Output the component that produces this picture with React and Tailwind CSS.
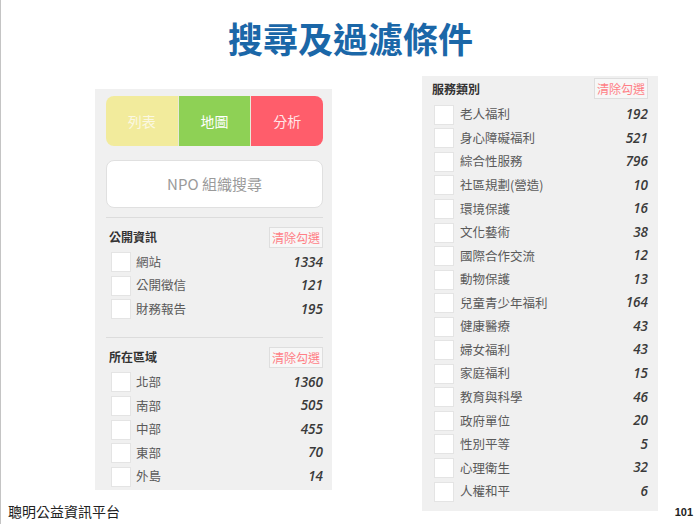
import React from "react";

const publicInfo = [
  ["網站", 1334],
  ["公開徵信", 121],
  ["財務報告", 195],
];

const regions = [
  ["北部", 1360],
  ["南部", 505],
  ["中部", 455],
  ["東部", 70],
  ["外島", 14],
];

const services = [
  ["老人福利", 192],
  ["身心障礙福利", 521],
  ["綜合性服務", 796],
  ["社區規劃(營造)", 10],
  ["環境保護", 16],
  ["文化藝術", 38],
  ["國際合作交流", 12],
  ["動物保護", 13],
  ["兒童青少年福利", 164],
  ["健康醫療", 43],
  ["婦女福利", 43],
  ["家庭福利", 15],
  ["教育與科學", 46],
  ["政府單位", 20],
  ["性別平等", 5],
  ["心理衛生", 32],
  ["人權和平", 6],
];

function ClearButton() {
  return (
    <button className="h-[21px] w-[54px] border border-[#dedede] bg-[#f7f7f7] text-[12px] leading-[19px] text-[#ff7f86]">
      清除勾選
    </button>
  );
}

function SectionHeader({ title }) {
  return (
    <div className="flex items-center justify-between h-[21px] pl-[3px]">
      <span className="text-[12px] font-semibold text-[#333]">{title}</span>
      <ClearButton />
    </div>
  );
}

function CheckRow({ label, count, boxMl, labelMl }) {
  return (
    <div className="flex items-center h-[23.55px]">
      <span className={`w-[20px] h-[20px] shrink-0 bg-white border border-[#e4e4e4] ${boxMl}`} />
      <span className={`text-[12.5px] text-[#5a5a5a] ${labelMl}`}>{label}</span>
      <span className="ml-auto font-['Open_Sans',sans-serif] italic font-semibold text-[13.5px] leading-none text-[#3a3a3a]">
        {count}
      </span>
    </div>
  );
}

function LeftSection({ title, items, last }) {
  return (
    <div className={last ? "pb-[2px]" : "mb-[16px]"}>
      <div className="h-px bg-[#dcdcdc]" />
      <div className="pt-[8.5px]">
        <SectionHeader title={title} />
      </div>
      <div className="mt-[3px]">
        {items.map(([label, count]) => (
          <CheckRow key={label} label={label} count={count} boxMl="ml-[5px]" labelMl="ml-[5px]" />
        ))}
      </div>
    </div>
  );
}

export default function App() {
  return (
    <div className="w-[700px] h-[524px] bg-white border-l border-[#c4c4c4] flex flex-col overflow-hidden font-['Noto_Sans_CJK_TC','Noto_Sans',sans-serif]">
      <h1 className="pt-[17px] text-center text-[35px] leading-[42px] font-bold text-[#1b67a8]">
        搜尋及過濾條件
      </h1>

      <div className="flex flex-1">
        {/* left column: filters + footer */}
        <div className="w-[421px] flex flex-col">
          <div className="ml-[94px] mt-[30px] w-[237px] bg-[#f0f0f0] pl-[11px] pr-[9px] pt-[7px]">
            <div className="flex h-[50px] rounded-[8px] overflow-hidden text-[14px] text-white">
              <div className="flex-1 flex items-center justify-center bg-[#f2eb9c] text-[#fbf8e2]">列表</div>
              <div className="flex-1 flex items-center justify-center bg-[#8ed155] border-l border-[#e9e9d8]">地圖</div>
              <div className="flex-1 flex items-center justify-center bg-[#ff5d6b] border-l border-[#e9e9d8] text-[#ffe6e8]">分析</div>
            </div>
            <div className="mt-[14px] h-[48px] bg-white border border-[#e0e0e0] rounded-[8px] flex items-center justify-center text-[15px] text-[#9a9a9a]">
              NPO 組織搜尋
            </div>
            <div className="mt-[9px]">
              <LeftSection title="公開資訊" items={publicInfo} />
              <LeftSection title="所在區域" items={regions} last />
            </div>
          </div>
          <div className="mt-auto pl-[7px] pb-[3px] text-[14px] leading-[20px] text-[#222]">
            聰明公益資訊平台
          </div>
        </div>

        {/* right panel: service categories */}
        <div className="mt-[17px] w-[236px] h-[435px] bg-[#f0f0f0] px-[10px] pt-[2px]">
          <div className="flex items-center justify-between h-[21px]">
            <span className="text-[12px] font-semibold text-[#333]">服務類別</span>
            <ClearButton />
          </div>
          <div className="mt-[4px]">
            {services.map(([label, count]) => (
              <CheckRow key={label} label={label} count={count} boxMl="ml-[2px]" labelMl="ml-[6px]" />
            ))}
          </div>
        </div>

        {/* page number */}
        <div className="flex-1 flex items-end justify-end pr-[7px] pb-[4px]">
          <span className="text-[11px] font-bold leading-[16px] text-[#222] font-['Liberation_Sans',sans-serif]">101</span>
        </div>
      </div>
    </div>
  );
}
